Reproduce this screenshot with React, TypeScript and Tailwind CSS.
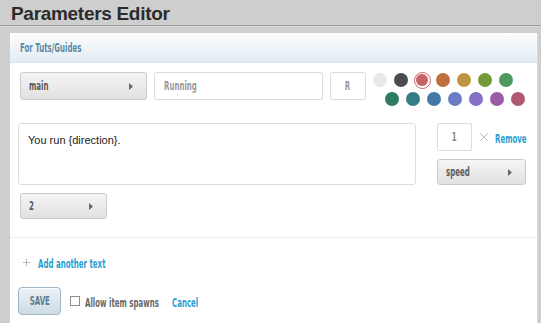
import type { ReactNode } from "react";
import { Plus, X } from "lucide-react";

const topColors = ["#e9e9e9", "#4a4d50", "#c86466", "#bf7040", "#bf9540", "#749a3a", "#4e9a5e"];
const bottomColors = ["#2e7d63", "#347c86", "#4378a8", "#6b7cc4", "#8470c4", "#9a5ca8", "#b05872"];

// narrow display face: squeeze DejaVu Condensed Bold into a fixed-width slot
const N = ({ children, w, center }: { children: ReactNode; w: string; center?: boolean }) => (
  <span className={`inline-flex shrink-0 overflow-visible ${w} ${center ? "justify-center" : ""}`}>
    <span
      className={`inline-block whitespace-nowrap font-['DejaVu_Sans_Condensed','DejaVu_Sans',sans-serif] text-[13px] font-bold leading-[16px] [font-stretch:condensed] scale-x-[0.6] ${center ? "origin-center" : "origin-left"}`}
    >
      {children}
    </span>
  </span>
);

const Caret = () => (
  <svg width="4" height="7" viewBox="0 0 4 7" className="shrink-0">
    <path d="M0 0 L4 3.5 L0 7 Z" fill="#666" />
  </svg>
);

const Dropdown = ({ label, w, className }: { label: string; w: string; className: string }) => (
  <div
    className={`flex items-center justify-between rounded-[3px] border border-[#cbcbcb] bg-gradient-to-b from-[#f5f5f5] to-[#e1e1e1] pl-[8px] pr-[13px] text-[#5a5a5a] ${className}`}
  >
    <N w={w}>{label}</N>
    <Caret />
  </div>
);

const Swatch = ({ color, selected }: { color: string; selected?: boolean }) => (
  <div className="flex h-[14px] w-[14px] items-center justify-center">
    {selected ? (
      <div className="flex h-[17px] w-[17px] shrink-0 items-center justify-center rounded-full border border-[#c86466] bg-white">
        <div className="h-[12px] w-[12px] rounded-full" style={{ background: color }} />
      </div>
    ) : (
      <div className="h-[14px] w-[14px] rounded-full" style={{ background: color }} />
    )}
  </div>
);

export default function App() {
  return (
    <div className="h-[323px] w-[541px] overflow-hidden bg-[#cecece]">
      <div className="border-b border-[#9d9d9d] pl-[11px] pt-[2px]">
        <h1 className="font-['Liberation_Sans',sans-serif] text-[19px] font-bold leading-[23px] tracking-[-0.3px] text-[#2b2b2b]">
          Parameters Editor
        </h1>
      </div>
      <div className="h-px bg-[#dcdcdc]" />
      <div className="ml-[10px] mr-[3px] mt-[6px] h-[300px] border-r border-[#d4dde3] bg-white">
        <div className="flex h-[30px] items-center border-b border-[#d6e2ea] bg-gradient-to-b from-[#fcfdfe] to-[#e2ecf2] pl-[10px] text-[#5b8aa5]">
          <N w="w-[70px]">For Tuts/Guides</N>
        </div>

        <div className="flex items-start pl-[10px] pt-[9px]">
          <Dropdown label="main" w="w-[40px]" className="h-[28px] w-[127px] shrink-0" />
          <div className="ml-[7px] flex h-[28px] w-[169px] shrink-0 items-center rounded-[2px] border border-[#ddd] pl-[9px] text-[#9a9a9a]">
            <N w="w-[40px]">Running</N>
          </div>
          <div className="ml-[7px] flex h-[28px] w-[36px] shrink-0 items-center justify-center rounded-[2px] border border-[#ddd] text-[#9a9a9a]">
            <N w="w-[10px]" center>R</N>
          </div>
          <div className="ml-[7px] flex flex-col gap-[5px] pt-[1px]">
            <div className="flex gap-[7px]">
              {topColors.map((c, i) => (
                <Swatch key={c} color={c} selected={i === 2} />
              ))}
            </div>
            <div className="ml-[12px] flex gap-[7px]">
              {bottomColors.map((c) => (
                <Swatch key={c} color={c} />
              ))}
            </div>
          </div>
        </div>

        <div className="flex items-start pl-[8px] pt-[17px]">
          <div className="h-[62px] w-[398px] shrink-0 rounded-[3px] border border-[#ddd] px-[9px] pt-[8px] font-['Liberation_Sans',sans-serif] text-[11px] text-[#222]">
            You run {"{direction}"}.
          </div>
          <div className="ml-[21px] flex flex-col gap-[8px]">
            <div className="flex items-center">
              <div className="flex h-[28px] w-[35px] shrink-0 items-center justify-center rounded-[2px] border border-[#ddd] text-[#888]">
                <N w="w-[8px]" center>1</N>
              </div>
              <X size={14} strokeWidth={1.5} className="ml-[5px] shrink-0 text-[#b5b5b5]" />
              <span className="ml-[4px] text-[#2a9fd0]">
                <N w="w-[30px]">Remove</N>
              </span>
            </div>
            <Dropdown label="speed" w="w-[30px]" className="h-[26px] w-[89px]" />
          </div>
        </div>

        <div className="pl-[10px] pt-[8px]">
          <Dropdown label="2" w="w-[10px]" className="h-[26px] w-[87px]" />
        </div>

        <div className="mt-[18px] border-t border-[#ececec]" />

        <div className="flex items-center pl-[11px] pt-[12px] text-[#2a9fd0]">
          <Plus size={11} strokeWidth={1.5} className="text-[#9a9a9a]" />
          <span className="ml-[6px]">
            <N w="w-[66px]">Add another text</N>
          </span>
        </div>

        <div className="flex items-center pl-[8px] pt-[13px]">
          <div className="flex h-[28px] w-[43px] items-center justify-center rounded-[4px] border border-[#9fb5c4] bg-gradient-to-b from-[#eef3f6] to-[#cddbe5] text-[#5e7d93] shadow-[inset_0_1px_0_#fff]">
            <N w="w-[22px]" center>SAVE</N>
          </div>
          <div className="ml-[9px] h-[10px] w-[10px] border border-[#8f8f8f] bg-white" />
          <span className="ml-[5px] text-[#6a6a6a]">
            <N w="w-[73px]">Allow item spawns</N>
          </span>
          <span className="ml-[14px] text-[#2a9fd0]">
            <N w="w-[26px]">Cancel</N>
          </span>
        </div>
      </div>
    </div>
  );
}
